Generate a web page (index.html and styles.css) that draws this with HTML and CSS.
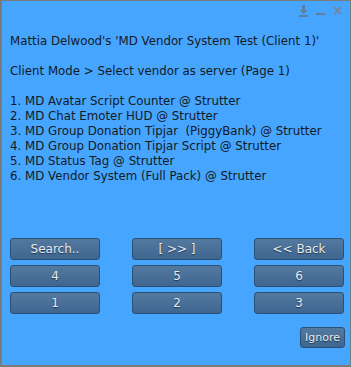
FILE: index.html
```html
<!DOCTYPE html>
<html>
<head>
  <title>MD Vendor System Test</title>
  <link rel="stylesheet" href="styles.css">
</head>
<body>
  <div class="dialog">
    <div class="titlebar">
      <svg class="tb-icon" width="9" height="12" viewBox="0 0 9 12">
        <rect x="3" y="0" width="3" height="5" fill="#5f7f9f"/>
        <path d="M0.5 5 H8.5 L4.5 9 Z" fill="#5f7f9f"/>
        <rect x="0" y="10" width="9" height="2" fill="#5f7f9f"/>
      </svg>
      <svg class="tb-icon" width="9" height="12" viewBox="0 0 9 12">
        <rect x="0" y="8" width="9" height="2" fill="#5f7f9f"/>
      </svg>
      <svg class="tb-icon" width="9" height="12" viewBox="0 0 9 12">
        <path d="M1 2 L8 9 M8 2 L1 9" stroke="#6f8aa6" stroke-width="2"/>
      </svg>
    </div>

    <div class="message">
      <p>Mattia Delwood's 'MD Vendor System Test (Client 1)'</p>
      <p>&nbsp;</p>
      <p>Client Mode &gt; Select vendor as server (Page 1)</p>
      <p>&nbsp;</p>
      <p>1. MD Avatar Script Counter @ Strutter</p>
      <p>2. MD Chat Emoter HUD @ Strutter</p>
      <p>3. MD Group Donation Tipjar&nbsp; (PiggyBank) @ Strutter</p>
      <p>4. MD Group Donation Tipjar Script @ Strutter</p>
      <p>5. MD Status Tag @ Strutter</p>
      <p>6. MD Vendor System (Full Pack) @ Strutter</p>
    </div>

    <div class="buttons">
      <button class="btn">Search..</button>
      <button class="btn">[ &gt;&gt; ]</button>
      <button class="btn">&lt;&lt; Back</button>
      <button class="btn">4</button>
      <button class="btn">5</button>
      <button class="btn">6</button>
      <button class="btn">1</button>
      <button class="btn">2</button>
      <button class="btn">3</button>
    </div>

    <div class="footer">
      <button class="btn btn-ignore">Ignore</button>
    </div>
  </div>
</body>
</html>
```

FILE: styles.css
```css
body { margin: 0; font-family: "DejaVu Sans", sans-serif; }
.dialog { width: 351px; height: 367px; box-sizing: border-box; background: #45a5ff; border: 1px solid #7b7b7b; border-left-width: 2px; border-bottom-width: 2px; }
.titlebar { display: flex; justify-content: flex-end; gap: 8px; padding: 4px 8px 0 0; height: 14px; }
.tb-icon { display: block; }
.message { padding-left: 8px; margin-top: 15px; font-size: 11.8px; line-height: 15px; color: #151a22; }
.message p { margin: 0; white-space: pre; }
.buttons { display: grid; grid-template-columns: 90px 90px 90px; column-gap: 32px; row-gap: 5px; padding-left: 8px; margin-top: 54px; }
.btn { height: 22px; box-sizing: border-box; border: 1px solid #2c4f74; border-radius: 3px; background: linear-gradient(#54799f, #3f6690); color: #e6ebf0; font-family: "DejaVu Sans", sans-serif; font-size: 12px; padding: 0; text-shadow: 0 1px 1px #1c3450; }
.footer { display: flex; justify-content: flex-end; padding-right: 5px; margin-top: 13px; }
.btn-ignore { width: 45px; height: 21px; font-size: 11px; }
```
